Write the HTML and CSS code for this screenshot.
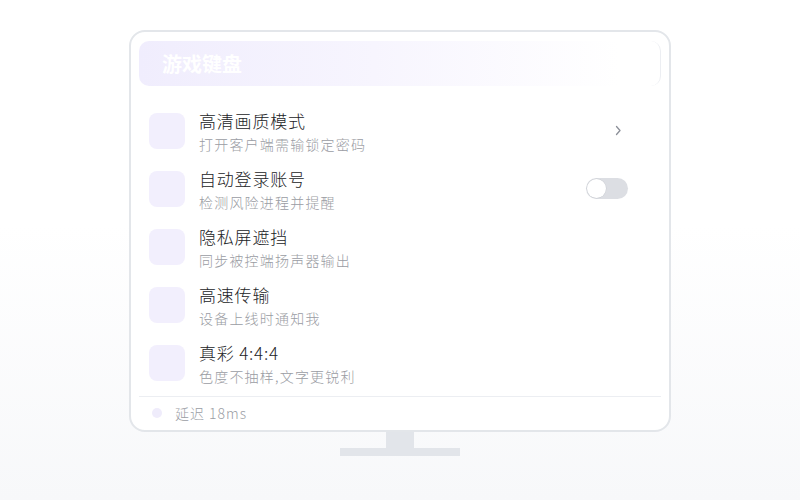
FILE: index.html
```html
<!DOCTYPE html>
<html lang="zh">
<head>
<meta charset="utf-8">
<link rel="stylesheet" href="styles.css">
</head>
<body>
<div class="stage">
  <div class="monitor">
    <div class="screen">
      <div class="header">游戏键盘</div>
      <div class="list">
        <div class="row">
          <div class="icon"></div>
          <div class="text"><div class="title">高清画质模式</div><div class="sub">打开客户端需输锁定密码</div></div>
          <div class="trail chevron"><svg width="7" height="11" viewBox="0 0 7 11"><path d="M1.5 1.5 L5 5.5 L1.5 9.5" fill="none" stroke="#8b8f98" stroke-width="1.3" stroke-linecap="round" stroke-linejoin="round"/></svg></div>
        </div>
        <div class="row">
          <div class="icon"></div>
          <div class="text"><div class="title">自动登录账号</div><div class="sub">检测风险进程并提醒</div></div>
          <div class="trail"><div class="toggle"><div class="knob"></div></div></div>
        </div>
        <div class="row">
          <div class="icon"></div>
          <div class="text"><div class="title">隐私屏遮挡</div><div class="sub">同步被控端扬声器输出</div></div>
        </div>
        <div class="row">
          <div class="icon"></div>
          <div class="text"><div class="title">高速传输</div><div class="sub">设备上线时通知我</div></div>
        </div>
        <div class="row">
          <div class="icon"></div>
          <div class="text"><div class="title">真彩 4:4:4</div><div class="sub">色度不抽样,文字更锐利</div></div>
        </div>
      </div>
      <div class="footer"><span class="dot"></span><span class="latency">延迟 18ms</span></div>
    </div>
    <div class="neck"></div>
    <div class="base"></div>
  </div>
</div>
</body>
</html>
```
FILE: styles.css
```css
html, body {
  margin: 0;
  padding: 0;
}
body {
  width: 800px;
  height: 500px;
  background: linear-gradient(180deg, #ffffff 0%, #ffffff 45%, #f7f8fa 100%);
  font-family: "Noto Sans CJK SC", "Noto Sans", sans-serif;
  overflow: hidden;
}
.stage {
  display: flex;
  justify-content: center;
  padding-top: 30px;
}
.monitor {
  display: flex;
  flex-direction: column;
  align-items: center;
}
.screen {
  box-sizing: border-box;
  width: 542px;
  height: 402px;
  border: 2px solid #e3e6ea;
  border-radius: 16px;
  background: #fff;
  padding: 9px 8px 0 8px;
  display: flex;
  flex-direction: column;
}
.header {
  height: 45px;
  box-sizing: border-box;
  border-radius: 10px;
  background: linear-gradient(90deg, #f0edfd 0%, #f7f5fe 45%, #ffffff 92%);
  border-right: 1px solid #eceef2;
  color: #ffffff;
  font-size: 20px;
  font-weight: 700;
  line-height: 45px;
  padding-left: 23px;
}
.list {
  margin-top: 15px;
  display: flex;
  flex-direction: column;
}
.row {
  height: 58px;
  display: flex;
  align-items: center;
  padding-left: 10px;
  padding-right: 33px;
}
.icon {
  width: 36px;
  height: 36px;
  border-radius: 8px;
  background: #f2effd;
  flex: none;
  margin-top: 2px;
}
.text {
  margin-left: 14px;
  flex: 1;
  margin-top: 2px;
}
.title {
  font-size: 17px;
  line-height: 22px;
  letter-spacing: 0.8px;
  font-weight: 300;
  color: #222326;
}
.sub {
  font-size: 14px;
  line-height: 18px;
  letter-spacing: 1.2px;
  font-weight: 300;
  margin-top: 3px;
  color: #9a9ca3;
}
.trail {
  display: flex;
  align-items: center;
}
.chevron {
  margin-right: 6px;
}
.chevron svg {
  display: block;
}
.toggle {
  width: 42px;
  height: 21px;
  border-radius: 11px;
  background: #dcdee3;
  padding: 1px;
  box-sizing: border-box;
  display: flex;
  align-items: center;
}
.knob {
  width: 19px;
  height: 19px;
  border-radius: 50%;
  background: #fff;
  box-shadow: 0 0 0 0.5px #c9ccd2;
}
.footer {
  margin-top: 5px;
  border-top: 1px solid #eceef2;
  height: 32px;
  display: flex;
  align-items: center;
  padding-left: 13px;
}
.dot {
  width: 10px;
  height: 10px;
  border-radius: 50%;
  background: #efecfb;
}
.latency {
  margin-left: 13px;
  font-size: 14px;
  letter-spacing: 1px;
  font-weight: 300;
  color: #9a9da4;
}
.neck {
  width: 28px;
  height: 16px;
  background: #e2e5ea;
}
.base {
  width: 120px;
  height: 8px;
  background: #e2e5ea;
}
```
